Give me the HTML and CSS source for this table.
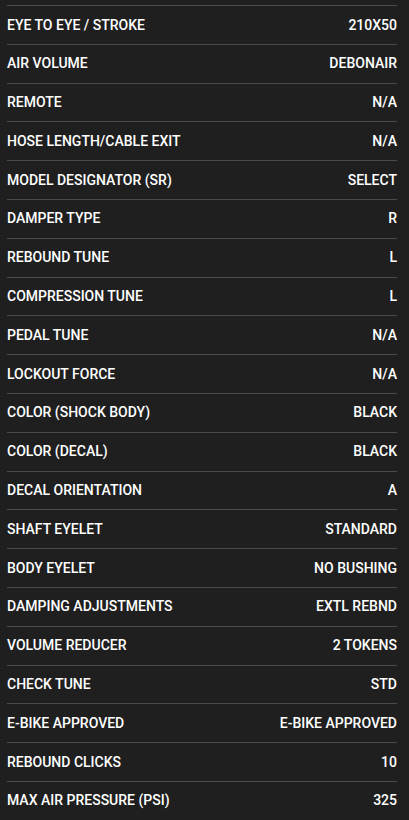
FILE: index.html
```html
<!DOCTYPE html>
<html>
<head>
<meta charset="utf-8">
<link rel="stylesheet" href="styles.css">
</head>
<body>
<div class="specs">
  <div class="row"><span class="k">EYE TO EYE / STROKE</span><span class="v">210X50</span></div>
  <div class="row"><span class="k">AIR VOLUME</span><span class="v">DEBONAIR</span></div>
  <div class="row"><span class="k">REMOTE</span><span class="v">N/A</span></div>
  <div class="row"><span class="k">HOSE LENGTH/CABLE EXIT</span><span class="v">N/A</span></div>
  <div class="row"><span class="k">MODEL DESIGNATOR (SR)</span><span class="v">SELECT</span></div>
  <div class="row"><span class="k">DAMPER TYPE</span><span class="v">R</span></div>
  <div class="row"><span class="k">REBOUND TUNE</span><span class="v">L</span></div>
  <div class="row"><span class="k">COMPRESSION TUNE</span><span class="v">L</span></div>
  <div class="row"><span class="k">PEDAL TUNE</span><span class="v">N/A</span></div>
  <div class="row"><span class="k">LOCKOUT FORCE</span><span class="v">N/A</span></div>
  <div class="row"><span class="k">COLOR (SHOCK BODY)</span><span class="v">BLACK</span></div>
  <div class="row"><span class="k">COLOR (DECAL)</span><span class="v">BLACK</span></div>
  <div class="row"><span class="k">DECAL ORIENTATION</span><span class="v">A</span></div>
  <div class="row"><span class="k">SHAFT EYELET</span><span class="v">STANDARD</span></div>
  <div class="row"><span class="k">BODY EYELET</span><span class="v">NO BUSHING</span></div>
  <div class="row"><span class="k">DAMPING ADJUSTMENTS</span><span class="v">EXTL REBND</span></div>
  <div class="row"><span class="k">VOLUME REDUCER</span><span class="v">2 TOKENS</span></div>
  <div class="row"><span class="k">CHECK TUNE</span><span class="v">STD</span></div>
  <div class="row"><span class="k">E-BIKE APPROVED</span><span class="v">E-BIKE APPROVED</span></div>
  <div class="row"><span class="k">REBOUND CLICKS</span><span class="v">10</span></div>
  <div class="row"><span class="k">MAX AIR PRESSURE (PSI)</span><span class="v">325</span></div>
</div>
</body>
</html>
```
FILE: styles.css
```css
html, body {
  margin: 0;
  background: #1f1f1f;
}
body {
  font-family: Roboto, "Liberation Sans", sans-serif;
  color: #ffffff;
  overflow: hidden;
}
.specs {
  padding: 5px 12px 0 7px;
}
.row {
  display: flex;
  justify-content: space-between;
  align-items: center;
  border-top: 1px solid #4a4a4a;
  padding: 10.5px 0;
  font-size: 14px;
  font-weight: 500;
  line-height: 16.8px;
}
```
